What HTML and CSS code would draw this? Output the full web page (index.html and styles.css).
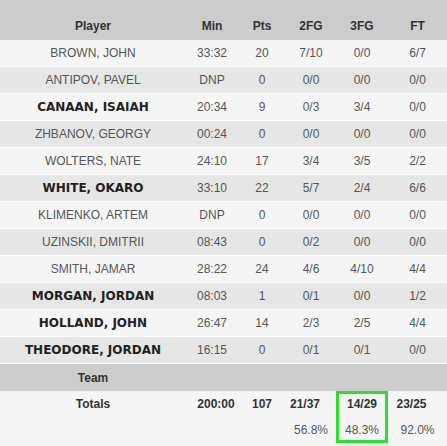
FILE: index.html
```html
<!DOCTYPE html>
<html>
<head>
<meta charset="utf-8">
<link rel="stylesheet" href="styles.css">
</head>
<body>
<table class="box">
  <colgroup>
    <col class="c-player"><col class="c-min"><col class="c-pts"><col class="c-2fg"><col class="c-3fg"><col class="c-ft">
  </colgroup>
  <thead>
    <tr class="head"><th>Player</th><th>Min</th><th>Pts</th><th>2FG</th><th>3FG</th><th>FT</th></tr>
  </thead>
  <tbody>
    <tr><td>BROWN, JOHN</td><td>33:32</td><td>20</td><td>7/10</td><td>0/0</td><td>6/7</td></tr>
    <tr><td>ANTIPOV, PAVEL</td><td>DNP</td><td>0</td><td>0/0</td><td>0/0</td><td>0/0</td></tr>
    <tr><td class="starter">CANAAN, ISAIAH</td><td>20:34</td><td>9</td><td>0/3</td><td>3/4</td><td>0/0</td></tr>
    <tr><td>ZHBANOV, GEORGY</td><td>00:24</td><td>0</td><td>0/0</td><td>0/0</td><td>0/0</td></tr>
    <tr><td>WOLTERS, NATE</td><td>24:10</td><td>17</td><td>3/4</td><td>3/5</td><td>2/2</td></tr>
    <tr><td class="starter">WHITE, OKARO</td><td>33:10</td><td>22</td><td>5/7</td><td>2/4</td><td>6/6</td></tr>
    <tr><td>KLIMENKO, ARTEM</td><td>DNP</td><td>0</td><td>0/0</td><td>0/0</td><td>0/0</td></tr>
    <tr><td>UZINSKII, DMITRII</td><td>08:43</td><td>0</td><td>0/2</td><td>0/0</td><td>0/0</td></tr>
    <tr><td>SMITH, JAMAR</td><td>28:22</td><td>24</td><td>4/6</td><td>4/10</td><td>4/4</td></tr>
    <tr><td class="starter">MORGAN, JORDAN</td><td>08:03</td><td>1</td><td>0/1</td><td>0/0</td><td>1/2</td></tr>
    <tr><td class="starter">HOLLAND, JOHN</td><td>26:47</td><td>14</td><td>2/3</td><td>2/5</td><td>4/4</td></tr>
    <tr><td class="starter">THEODORE, JORDAN</td><td>16:15</td><td>0</td><td>0/1</td><td>0/1</td><td>0/0</td></tr>
    <tr class="team"><td>Team</td><td></td><td></td><td></td><td></td><td></td></tr>
  </tbody>
  <tfoot>
    <tr class="totals"><td>Totals</td><td class="t-min">200:00</td><td>107</td><td class="t-2fg">21/37</td><td class="hl-top">14/29</td><td class="t-ft">23/25</td></tr>
    <tr class="pct"><td></td><td></td><td></td><td>56.8%</td><td class="hl-bot">48.3%</td><td>92.0%</td></tr>
  </tfoot>
</table>
</body>
</html>
```
FILE: styles.css
```css
html, body {
  margin: 0;
  padding: 0;
  background: #f5f5f5;
}
.box {
  width: 447px;
  table-layout: fixed;
  border-collapse: collapse;
  font-family: "Liberation Sans", Arial, sans-serif;
  font-size: 12px;
  color: #555;
}
.c-player { width: 186px; }
.c-min { width: 52px; }
.c-pts { width: 48px; }
.c-2fg { width: 50px; }
.c-3fg { width: 52px; }
.c-ft { width: 59px; }
th, td {
  text-align: center;
  padding: 0;
}
.head th {
  background: #cccccc;
  height: 40px;
  padding-top: 12px;
  box-sizing: border-box;
  font-weight: bold;
  color: #333;
}
tbody tr td {
  height: 26px;
  border-bottom: 1px solid #fbfbfb;
}
tbody tr:nth-child(odd) td { background: #f5f5f5; }
tbody tr:nth-child(even) td { background: #e6e6e6; }
td.starter {
  font-family: "DejaVu Sans", Verdana, sans-serif;
  font-weight: bold;
  color: #222;
}
tbody tr.team td {
  background: #cccccc;
  font-weight: bold;
  color: #333;
  border-bottom: none;
  height: 27px;
}
.totals td {
  height: 26px;
  font-weight: bold;
  color: #333;
}
.totals td.t-min { padding-left: 8px; }
.totals td.t-2fg { padding-right: 12px; }
.totals td.t-ft { padding-right: 12px; }
.pct td {
  height: 26px;
}
td.hl-top {
  box-shadow: inset 3px 0 0 #2ee02e, inset -3px 0 0 #2ee02e, inset 0 3px 0 #2ee02e;
}
td.hl-bot {
  box-shadow: inset 3px 0 0 #2ee02e, inset -3px 0 0 #2ee02e, inset 0 -3px 0 #2ee02e;
}
```
